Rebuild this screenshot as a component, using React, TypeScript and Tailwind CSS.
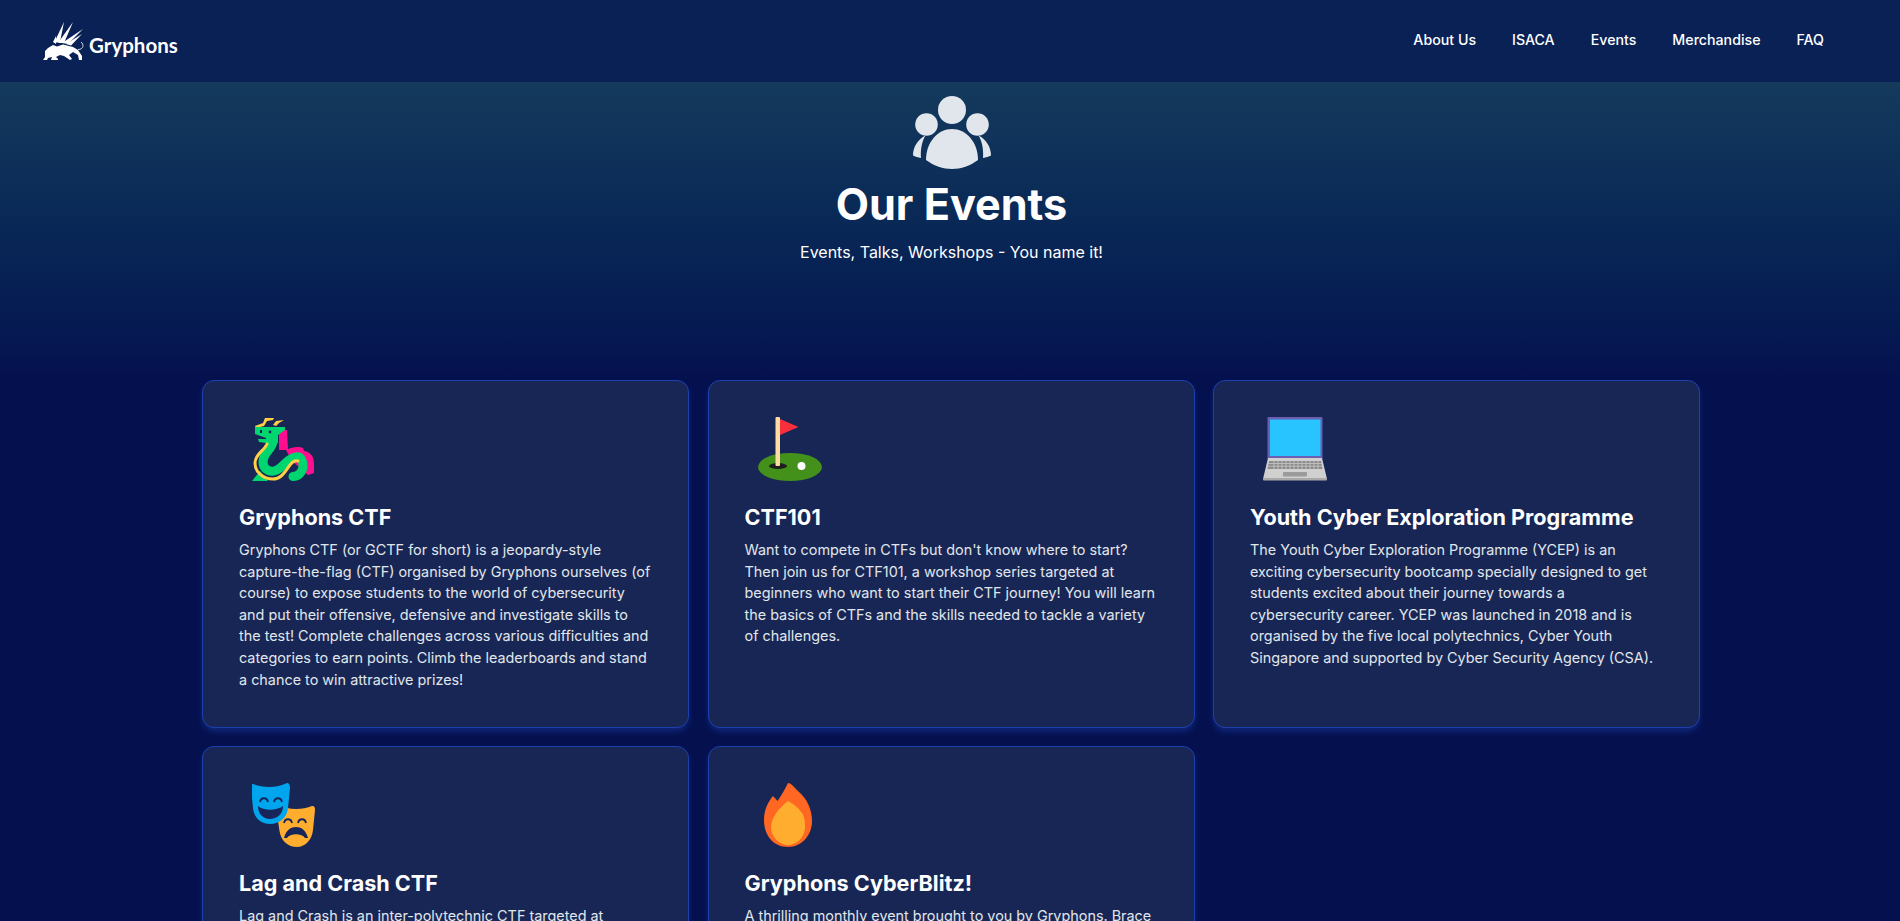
const inter = { fontFamily: 'Inter, sans-serif' }

function GryphonLogo() {
  return (
    <svg viewBox="0 0 41 39" className="h-[39px] w-[41px]" fill="white">
      <path d="M11 21 L21 0 L17 20 Z" />
      <path d="M15 21 L30 0 L21 21 Z" />
      <path d="M19 21 L40 7 L25 22 Z" />
      <path d="M23 22 L39 12 L28 23.500 Z" />
      <path d="M10 20 L13 14 L13 22 Z" />
      <path d="M0 38 L2 35 L2 29 L5 26 L10 23 L14 24.500 L20 22.500 L30 25 L35 28 L39 34 L39 38 L36 38 L35 33 L30 30 L26 33 L29 37 L27 38 L21 34 L17 33 L13 35 L15 37 L15 38 L8 38 L9 35 L5 36 L4 38 Z" />
      <path d="M35 27.500 C41 27.500 41 22 38 20" stroke="white" strokeWidth="0.800" fill="none" />
    </svg>
  )
}

function GroupIcon() {
  return (
    <svg viewBox="0 0 80 74" className="h-[74px] w-[80px]" fill="#e0e6ec">
      <circle cx="40" cy="14" r="14" />
      <circle cx="14.500" cy="28.500" r="11.300" />
      <circle cx="65.500" cy="28.500" r="11.300" />
      <path d="M14 64 C14 46 26 33 40 33 C54 33 66 46 66 64 C58 70 49 73 40 73 C31 73 22 70 14 64 Z" />
      <path d="M13.500 39.500 C9 47 8.500 56 9 62 C6 61.500 3 60.500 1 59.500 C1 51 6 43 13.500 39.500 Z" />
      <path d="M66.500 39.500 C71 47 71.500 56 71 62 C74 61.500 77 60.500 79 59.500 C79 51 74 43 66.500 39.500 Z" />
    </svg>
  )
}

function DragonIcon() {
  return (
    <svg viewBox="0 0 64 64" className="h-[64px] w-[64px]">
      <path d="M27 12 L35 13 L36 33 L27 33 Z" fill="#ff0f90" />
      <path d="M34 33 C40 30 47 29 51 31 L52 34 C59 35 62 40 62 47 L62 56 L56 58 L40 44 Z" fill="#ff0f90" />
      <path d="M3 9 L11 6 L13 1 L22 1 L21 3 L15 4 L12 9 L4 11 Z M21 8 L24 4 L32 3 L27 6 L24 9 Z" fill="#ffd045" />
      <path d="M3 10 L33 10 L33 13 L26 18 L26 26 L14 26 L7 25 L6 22 L14 21 L3 17 Z" fill="#00d66f" />
      <path d="M21 24 C21 32 11 35 11 45 C11 53 19 56 25 53 C33 49 35 41 44 40 C49 39 51 44 51 49 C51 55 46 59.500 41 59.500" fill="none" stroke="#00d66f" strokeWidth="9" strokeLinecap="round" />
      <path d="M0 64 L8 54 L16 64 Z" fill="#00d66f" />
      <path d="M15 27 C12 34 3 37 3 46 C3 55 11 62 21 62 C30 62 33 54 38 48 C40 45 43 43 46 44" fill="none" stroke="#ffd045" strokeWidth="3" strokeLinecap="round" />
      <rect x="8" y="13" width="2" height="3" fill="#17255a" />
      <circle cx="18" cy="15" r="1.400" fill="#17255a" />
      <rect x="6" y="21" width="8" height="1" fill="#17255a" />
    </svg>
  )
}

function GolfIcon() {
  return (
    <svg viewBox="0 0 64 64" className="h-[64px] w-[64px]">
      <ellipse cx="32" cy="50" rx="32" ry="14" fill="#43901b" />
      <ellipse cx="20" cy="49" rx="9" ry="3" fill="#1f1f1f" />
      <rect x="17.500" y="0" width="4.500" height="49" rx="1" fill="#ffdca3" />
      <path d="M22 2 L40.500 10 L22 18 Z" fill="#f92f3c" />
      <circle cx="43.500" cy="49" r="4" fill="#ffffff" />
    </svg>
  )
}

function LaptopIcon() {
  return (
    <svg viewBox="0 0 64 64" className="h-[64px] w-[64px]">
      <rect x="4.500" y="0" width="55" height="42" rx="1" fill="#6a5fb0" />
      <rect x="7" y="2.500" width="50.500" height="36.500" fill="#27c4ff" />
      <path d="M5 41 L59 41 L64 62 L0 62 Z" fill="#d0d0d0" />
      <rect x="0" y="61" width="64" height="2.500" rx="1" fill="#a9a9a9" />
      <path d="M6 44 L58 44 L59.500 52 L4.500 52 Z" fill="#8c8c8c" />
      <g stroke="#c8c8c8" strokeWidth="0.800">
        <path d="M5 46.500 H59 M5 49.200 H59" />
        <path d="M11 44 V52 M15 44 V52 M19 44 V52 M23 44 V52 M27 44 V52 M31 44 V52 M35 44 V52 M39 44 V52 M43 44 V52 M47 44 V52 M51 44 V52 M55 44 V52" />
      </g>
      <rect x="20" y="55" width="24" height="4.500" rx="1" fill="#9b9b9b" />
    </svg>
  )
}

function MasksIcon() {
  return (
    <svg viewBox="1 0 64 64" className="h-[64px] w-[64px]">
      <path d="M36 25 C44 27 54 26 61 23 C63 22.500 64 24 64 27 L62 47 C61 57 54 64 46 64 C37 64 30 58 28.500 48 L27 38 Z" fill="#ffad2e" />
      <path d="M33 40 C34 35 40 35 41 40 M47 40 C48 35 54 35 55 40" fill="none" stroke="#17255a" strokeWidth="1.800" />
      <path d="M33 55 C35 47 40 44 45 44 C50 44 55 47 57 55 L54 55 C51 50 39 50 36 55 Z" fill="#17255a" />
      <path d="M2 1 C12 5 26 5 36 0 C38 0 39 2 39 5 L37 25 C36 35 28 41 19 41 C10 41 3 35 2 25 L0 5 C0 2 0 1 2 1 Z" fill="#00a6ed" />
      <path d="M9 19 C10 14 16 14 17 19 M23 19 C24 14 30 14 31 19" fill="none" stroke="#17255a" strokeWidth="1.800" />
      <path d="M7 23 C13 28 25 28 32 23 C32 31 26 36 19 36 C12 36 7 31 7 23 Z" fill="#17255a" />
    </svg>
  )
}

function FireIcon() {
  return (
    <svg viewBox="-6 0 64 64" className="h-[64px] w-[64px]">
      <path d="M24 0 C27 0 31 5 35 9 C43 16 48 26 48 38 C48 53 37 64 24 64 C10 64 0 53 0 37 C0 27 4 19 9 13 L13.500 18 C17 13 21 6 24 0 Z" fill="#ff6723" />
      <path d="M24 18 C28 20 34 24 38 30 C41 35 41 40 41 44 C41 54 33 62 24 62 C15 62 7 54 7 44 C7 35 14 26 24 18 Z" fill="#ffad2e" />
    </svg>
  )
}

const events = [
  {
    title: 'Gryphons CTF',
    icon: <DragonIcon />,
    text: 'Gryphons CTF (or GCTF for short) is a jeopardy-style capture-the-flag (CTF) organised by Gryphons ourselves (of course) to expose students to the world of cybersecurity and put their offensive, defensive and investigate skills to the test! Complete challenges across various difficulties and categories to earn points. Climb the leaderboards and stand a chance to win attractive prizes!',
  },
  {
    title: 'CTF101',
    icon: <GolfIcon />,
    text: "Want to compete in CTFs but don't know where to start? Then join us for CTF101, a workshop series targeted at beginners who want to start their CTF journey! You will learn the basics of CTFs and the skills needed to tackle a variety of challenges.",
  },
  {
    title: 'Youth Cyber Exploration Programme',
    icon: <LaptopIcon />,
    text: 'The Youth Cyber Exploration Programme (YCEP) is an exciting cybersecurity bootcamp specially designed to get students excited about their journey towards a cybersecurity career. YCEP was launched in 2018 and is organised by the five local polytechnics, Cyber Youth Singapore and supported by Cyber Security Agency (CSA).',
  },
  {
    title: 'Lag and Crash CTF',
    icon: <MasksIcon />,
    text: 'Lag and Crash is an inter-polytechnic CTF targeted at',
  },
  {
    title: 'Gryphons CyberBlitz!',
    icon: <FireIcon />,
    text: 'A thrilling monthly event brought to you by Gryphons. Brace',
  },
]

export default function App() {
  return (
    <div className="flex h-screen flex-col overflow-hidden bg-[#05114f] text-white" style={inter}>
      <header className="flex h-[82px] shrink-0 items-center justify-between bg-[#0a2156] pl-[43px] pr-[76px]">
        <a className="flex items-center gap-[5px] pt-[1px]">
          <GryphonLogo />
          <span className="mt-[7px] text-[20.500px] font-bold leading-none" style={{ fontFamily: 'Lato, sans-serif' }}>
            Gryphons
          </span>
        </a>
        <nav className="flex gap-[36px] pb-[3px] text-[14.200px] font-medium">
          <a>About Us</a>
          <a>ISACA</a>
          <a>Events</a>
          <a>Merchandise</a>
          <a>FAQ</a>
        </nav>
      </header>

      <section className="flex h-[298px] shrink-0 flex-col items-center bg-gradient-to-b from-[#143a5c] to-[#05114f] pl-[3px] pt-[14px]">
        <GroupIcon />
        <h1 className="mt-[4.500px] text-[43.200px] font-bold leading-[58px]">Our Events</h1>
        <p className="mt-[7.500px] text-[16px] leading-[24px]">Events, Talks, Workshops - You name it!</p>
      </section>

      <main className="ml-[202px] grid w-[1498px] grid-cols-3 gap-x-[18.500px] gap-y-[18px]">
        {events.map((event) => (
          <div
            key={event.title}
            className="h-[348px] rounded-xl border border-[#1e40af] bg-[#182655] pl-[36px] pr-[37.500px] pt-[36px] shadow-[0_4px_6px_-1px_rgba(30,64,175,0.5)]"
          >
            <div className="pl-[13px]">{event.icon}</div>
            <h3 className="mt-[20px] text-[21.600px] font-bold leading-[32px]">{event.title}</h3>
            <p className="mt-[6px] text-[14.400px] leading-[21.600px] text-[#e0e6ec]">{event.text}</p>
          </div>
        ))}
      </main>
    </div>
  )
}
